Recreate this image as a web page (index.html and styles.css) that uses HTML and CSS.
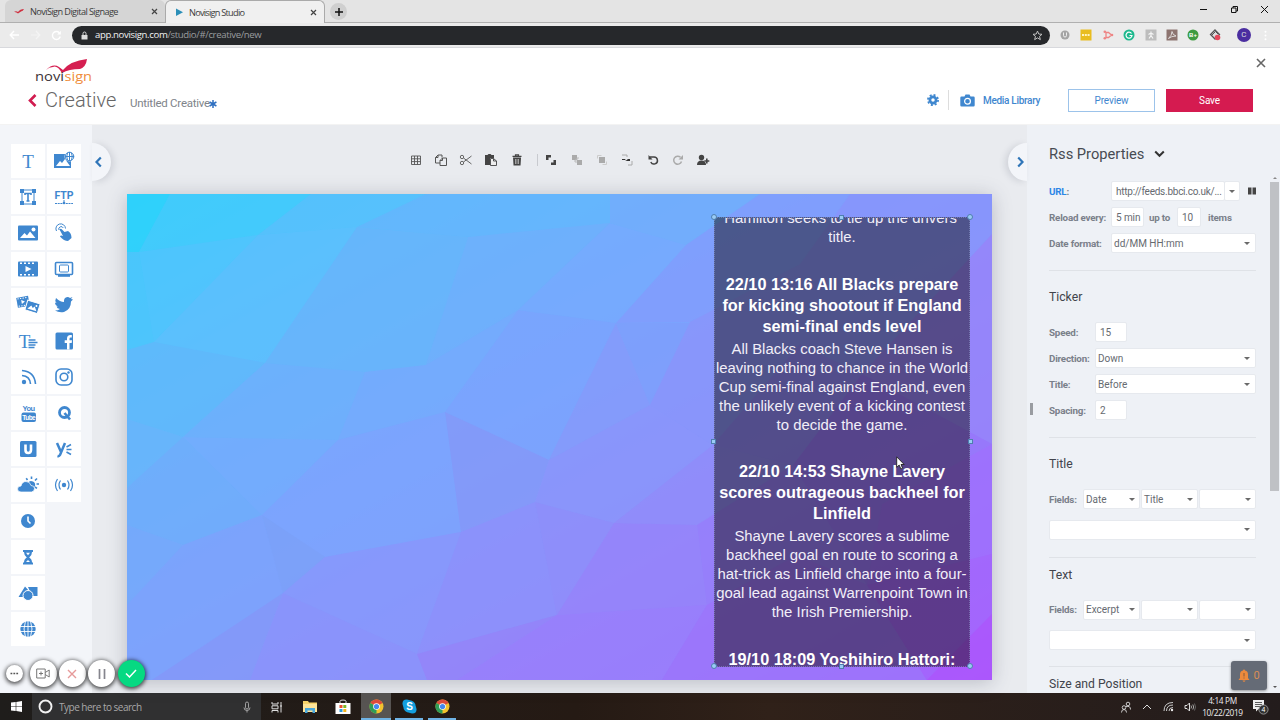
FILE: index.html
```html
<!DOCTYPE html>
<html lang="en">
  <head>
    <meta charset="UTF-8" />
    <meta name="viewport" content="width=device-width, initial-scale=1.0" />
    <title>Novisign Studio</title>
    <link rel="stylesheet" href="styles.css">
  </head>
  <body>
    <!-- Browser tabs -->
    <div class="tab-strip">
      <div class="tab">
        <svg class="tab-icon" width="10" height="10" viewBox="0 0 10 10"><path d="M0 6 Q2 4.500 4 6 Q6 3 10 3 Q9 5 7 5.500 L4 7.500 Q2 5.500 0 6z" fill="#cf3040"/></svg>
        <span class="tab-name">NoviSign Digital Signage</span>
        <svg width="7" height="7" viewBox="0 0 7 7"><path d="M1 1l5 5M6 1l-5 5" stroke="#444" stroke-width="1.200"/></svg>
      </div>
      <div class="tab active">
        <svg class="tab-icon" width="10" height="10" viewBox="0 0 10 10"><path d="M1 1.500l7 3.700-7 3.700z" fill="#2b8fb8"/></svg>
        <span class="tab-name">Novisign Studio</span>
        <svg width="7" height="7" viewBox="0 0 7 7"><path d="M1 1l5 5M6 1l-5 5" stroke="#444" stroke-width="1.200"/></svg>
      </div>
      <div class="new-tab"><svg width="10" height="10" viewBox="0 0 10 10"><path d="M5 1v8M1 5h8" stroke="#111" stroke-width="1.500"/></svg></div>
      <div class="window-controls">
        <svg width="9" height="9" viewBox="0 0 9 9"><path d="M1 4.500h7" stroke="#111"/></svg>
        <svg width="9" height="9" viewBox="0 0 9 9"><path d="M1.500 3h4.500v4.500h-4.500zM3 3v-1.500h4.500v4.500h-1.500" fill="none" stroke="#111"/></svg>
        <svg width="9" height="9" viewBox="0 0 9 9"><path d="M1 1l7 7M8 1l-7 7" stroke="#111"/></svg>
      </div>
    </div>

    <!-- Address bar -->
    <div class="toolbar">
      <div class="nav-buttons">
        <svg width="11" height="10" viewBox="0 0 11 10"><path d="M10 5H1.500M5 1L1.200 5 5 9" fill="none" stroke="#fff" stroke-width="1.400"/></svg>
        <svg width="11" height="10" viewBox="0 0 11 10"><path d="M1 5h8.500M6 1l3.800 4L6 9" fill="none" stroke="#f4f4f4" stroke-width="1.200"/></svg>
        <svg width="11" height="11" viewBox="0 0 11 11"><path d="M9.300 6.500A4 4 0 1 1 8.300 2.700" fill="none" stroke="#fff" stroke-width="1.400"/><path d="M9.800.8v3.700H6.100z" fill="#fff"/></svg>
      </div>
      <div class="address">
        <svg width="7" height="9" viewBox="0 0 7 9"><path d="M.5 4h6v4.500h-6z" fill="#ddd"/><path d="M2 4V2.500a1.500 1.500 0 0 1 3 0V4" fill="none" stroke="#ddd"/></svg>
        <span class="url"><b>app.novisign.com</b>/studio/#/creative/new</span>
        <svg width="11" height="11" viewBox="0 0 12 12"><path d="M6 1.200l1.400 3.200 3.500.3-2.700 2.300.9 3.500L6 8.600l-3.100 1.900.9-3.500L1.100 4.700l3.500-.3z" fill="none" stroke="#ccc"/></svg>
      </div>
      <div class="extensions">
        <svg width="12" height="12" viewBox="0 0 12 12"><circle cx="6" cy="6" r="4.500" fill="#a5a5a5"/><path d="M4.500 3.500v3a1.500 1.500 0 0 0 3 0v-3" fill="none" stroke="#eee"/></svg>
        <svg width="12" height="12" viewBox="0 0 12 12"><path d="M.5.5h11v11H.5z" fill="#e9bd20"/><path d="M2 6h8" stroke="#fff3c0" stroke-width="1.800" stroke-dasharray="2 .8"/></svg>
        <svg width="12" height="12" viewBox="0 0 12 12"><path d="M4 3.500h2.500L9.500 6 6.500 8.500H4z" fill="none" stroke="#ee8585" stroke-width="1.300"/><circle cx="2.800" cy="2.800" r="1.300" fill="#ee8585"/><circle cx="2.800" cy="9.200" r="1.300" fill="#ee8585"/><circle cx="10" cy="6" r="1.300" fill="#ee8585"/></svg>
        <svg width="12" height="12" viewBox="0 0 12 12"><circle cx="6" cy="6" r="5.500" fill="#1fb98e"/><path d="M8.500 4.500A3 3 0 1 0 9 6.500H6.500" fill="none" stroke="#fff" stroke-width="1.200"/></svg>
        <svg width="12" height="12" viewBox="0 0 12 12"><path d="M.5.500h11v11H.5z" fill="#bdbdbd"/><path d="M6 2.500v4l-2 3M6 6.500l2 3M3.500 5.500L6 4l2.500 1.500" fill="none" stroke="#f4f4f4" stroke-width="1.200"/></svg>
        <svg width="12" height="12" viewBox="0 0 12 12"><path d="M.5.500h11v11H.5z" fill="#8d7470"/><path d="M6 2.500q0 4-3.500 7 3-2.500 7.500-2.500Q6.500 6 6 2.500" fill="none" stroke="#eee" stroke-width=".8"/></svg>
        <svg width="12" height="12" viewBox="0 0 12 12"><circle cx="6" cy="6" r="5.500" fill="#3e9b40"/><text x="6" y="8.300" class="ext-label">B+</text></svg>
        <svg width="12" height="12" viewBox="0 0 12 12"><path d="M6 1l4.500 4.500L6 10 1.500 5.500z" fill="#ddd" stroke="#555" stroke-width="1.300"/><path d="M3 6l3.500-3.500L9 5" fill="none" stroke="#555"/><circle cx="8.500" cy="8.500" r="2.800" fill="#e6475a"/></svg>
      </div>
      <div class="avatar">C</div>
      <svg class="kebab" width="3" height="11" viewBox="0 0 3 11"><circle cx="1.500" cy="1.800" r="1" fill="#fff"/><circle cx="1.500" cy="5.500" r="1" fill="#fff"/><circle cx="1.500" cy="9.200" r="1" fill="#fff"/></svg>
    </div>

    <!-- App header -->
    <header class="app-header">
      <div class="brand">
        <svg class="logo" width="60" height="26" viewBox="0 0 60 26">
          <path d="M11 12 Q18 5 24 9 L28 12 Q35 3 52 1 Q51 9 45 11 Q34 11 27 15 Q22 7 18 9 Q14 9 11 12z" fill="#d51f51"/>
          <text x="0" y="23" textLength="29" lengthAdjust="spacingAndGlyphs" class="logo-text" fill="#3a3236">novi</text>
          <text x="29.500" y="23" textLength="27.500" lengthAdjust="spacingAndGlyphs" class="logo-text" fill="#ef8c3a">sign</text>
        </svg>
        <div class="page-title">
          <svg width="9" height="13" viewBox="0 0 9 13"><path d="M7.500 1L2 6.500 7.500 12" fill="none" stroke="#d11c50" stroke-width="2.600"/></svg>
          <h1>Creative</h1>
          <span class="creative-name">Untitled Creative</span>
          <svg width="8" height="8" viewBox="0 0 8 8"><path d="M4 0v8M.6 2l6.800 4M7.400 2L.6 6" stroke="#2f6fc0" stroke-width="1.500"/></svg>
        </div>
      </div>
      <svg class="close" width="10" height="10" viewBox="0 0 10 10"><path d="M1 1l8 8M9 1L1 9" stroke="#666" stroke-width="1.600"/></svg>
      <div class="header-actions">
        <svg width="12" height="12" viewBox="0 0 12 12"><circle cx="6" cy="6" r="3.100" fill="none" stroke="#3f87cf" stroke-width="2.700"/><circle cx="6" cy="6" r="5.100" fill="none" stroke="#3f87cf" stroke-width="1.700" stroke-dasharray="2 2"/></svg>
        <span class="divider"></span>
        <svg width="15" height="13" viewBox="0 0 15 13"><path d="M1.500 2.500h3L5.500.5h4l1 2h3q1.200 0 1.200 1.200v7.600q0 1.200-1.200 1.200h-12Q.3 12.500.3 11.300V3.700Q.3 2.500 1.500 2.500z" fill="#3f87cf"/><circle cx="7.500" cy="7.300" r="2.900" fill="none" stroke="#fff" stroke-width="1.200"/></svg>
        <span class="library-link">Media Library</span>
        <button class="btn btn-preview">Preview</button>
        <button class="btn btn-save">Save</button>
      </div>
    </header>

    <main class="workspace">
      <!-- Widget palette -->
      <aside class="sidebar">
        <div class="tools">
          <div class="tool"><svg viewBox="0 0 24 24"><text x="12" y="18.500" class="serif-t">T</text></svg></div>
          <div class="tool"><svg viewBox="0 0 24 24"><path d="M2 5h17v14H2z"/><path d="M4 17l4-5 2 2 3-4 5 7z" fill="#fff"/><circle cx="17.500" cy="7.500" r="5" fill="#fff"/><g class="line"><circle cx="17.500" cy="7.500" r="4.300"/><path d="M13 7.500h9M17.500 3v9M15.500 4q-1.500 3.500 0 7M19.500 4q1.500 3.500 0 7"/></g></svg></div>
          <div class="tool"><svg viewBox="0 0 24 24"><path d="M4 4h4v4H4zM16 4h4v4h-4zM4 16h4v4H4zM16 16h4v4h-4z"/><path class="line" d="M6 8v8M18 8v8M8 5h8M8 19h8"/><path class="line bold" d="M9 10V8.500h6V10M12 9v7M10.500 16h3"/></svg></div>
          <div class="tool"><svg viewBox="0 0 24 24"><text x="12" y="14" class="ftp">FTP</text><path class="line" d="M3 18.500h18M12 15v3" stroke-dasharray="2 .7"/><circle cx="12" cy="18" r="1.300"/></svg></div>
          <div class="tool"><svg viewBox="0 0 24 24"><rect x="2" y="4.500" width="20" height="15" rx="1"/><path d="M4 17l4.500-5 2.500 2.500 3-4 5.500 6.500z" fill="#fff"/><circle cx="17.500" cy="8.500" r="2" fill="#fff"/></svg></div>
          <div class="tool"><svg viewBox="0 0 24 24"><path class="line" d="M4.500 10a4.800 4.800 0 1 1 9-2.500M7 9a2.300 2.300 0 0 1 4.300-2"/><path d="M7.500 8.500q1.300-1.500 2.500 0l2.500 2.500 3.500-1q3.500 2 3.500 7L16 20q-4 0-8-4.500.5-1.500 3-.5z"/></svg></div>
          <div class="tool"><svg viewBox="0 0 24 24"><rect x="2" y="4.500" width="20" height="15" rx="1"/><path d="M4 6.300h16M4 17.700h16" stroke="#fff" stroke-width="1.500" stroke-dasharray="2 2"/><path d="M9.500 9l6 3-6 3z" fill="#fff"/></svg></div>
          <div class="tool"><svg viewBox="0 0 24 24"><rect class="line bold" x="3.500" y="5.500" width="17" height="12" rx="1"/><rect class="line" x="7.500" y="8" width="9" height="7" rx="1"/><path d="M6 18h12v1.800H6z"/></svg></div>
          <div class="tool"><svg viewBox="0 0 24 24"><g transform="rotate(-10 6 9)"><rect x="1" y="4" width="12" height="10"/><path d="M2 5.300h10M2 12.700h10" stroke="#fff" stroke-dasharray="1.300 1.300"/><path d="M5.500 7l3.500 2-3.500 2z" fill="#fff"/></g><g transform="rotate(17 17 14)"><rect x="10" y="9" width="13" height="10" stroke="#fff"/><path d="M12 17l3-4 2 2 1.500-2 3 4z" fill="#fff"/><circle cx="20" cy="12" r="1" fill="#fff"/></g></svg></div>
          <div class="tool"><svg viewBox="0 0 24 24"><path d="M21 6.500l-2 2q0 8-7 10.500-5 1-9-1.500 3 0 5-1.500-3-.5-3.500-2.500h1.500Q3 12.300 3 9.500l1.500.5Q2.500 7.500 4 5q4 4 8 4-.5-4.500 3.500-5 1.500 0 2.500 1l2.500-1-1.500 2z"/></svg></div>
          <div class="tool"><svg viewBox="0 0 24 24"><text x="8.500" y="18.500" class="serif-t">T</text><path class="line bold" d="M12.500 11h7M12.500 13.500h9M12.500 16h7M12.500 18.500h6"/></svg></div>
          <div class="tool"><svg viewBox="0 0 24 24"><rect x="3.500" y="3.500" width="17.500" height="17" rx="1.500"/><path d="M15 20.500V14h-2.300v-2.700H15V9.500q0-3.500 3.500-3.500h1.300v2.500h-1.300q-1 0-1 1.300v1.500H20l-.3 2.700h-2.200v6.500" fill="#fff"/></svg></div>
          <div class="tool"><svg viewBox="0 0 24 24"><circle cx="8" cy="17" r="2.200"/><path class="line bold" d="M6 10.500q8 .5 8.500 8.500M6 5.500q12.500 1 13.500 13.500"/></svg></div>
          <div class="tool"><svg viewBox="0 0 24 24"><rect class="line bold" x="4" y="4" width="16" height="16" rx="5"/><circle class="line bold" cx="12" cy="12" r="3.800"/><circle cx="16.500" cy="7.500" r="1.200"/></svg></div>
          <div class="tool"><svg viewBox="0 0 24 24"><text x="12.500" y="10" class="you">You</text><rect x="5.500" y="11.500" width="14.500" height="9.500" rx="2"/><text x="12.700" y="19.300" class="you tube">Tube</text></svg></div>
          <div class="tool"><svg viewBox="0 0 24 24"><circle cx="12.500" cy="11.500" r="5" fill="none" stroke="#3f87cf" stroke-width="2.800"/><path d="M12.500 12l5.500 6.500" stroke="#3f87cf" stroke-width="2.600"/></svg></div>
          <div class="tool"><svg viewBox="0 0 24 24"><rect x="4" y="4" width="16.500" height="16" rx="1.500"/><path d="M9.500 7.500v5.500q0 3 2.700 3t2.800-3V7.500" fill="none" stroke="#fff" stroke-width="2.600"/></svg></div>
          <div class="tool"><svg viewBox="0 0 24 24"><path d="M5 6l4 9M13 6L8 18q-.8 1.500-2.500 1" fill="none" stroke="#3f87cf" stroke-width="2.500"/><path class="line bold" d="M14.500 10l4.500-2.500M14.500 12.500h5M14.500 15l4.500 2.500"/></svg></div>
          <div class="tool"><svg viewBox="0 0 24 24"><path class="line bold" d="M15.500 6V3.500M11.500 7l-1.300-1.800M19 7.500L21 5.500M20.500 11H23M19 14l2 1.300"/><path d="M12 9.500a4 4 0 0 1 7 3.500l-1.500 2z"/><path d="M5 19q-3.500 0-3.500-3t3.500-3q1-4.500 5-4.500t5 4q3.500 0 3.500 3t-3 3.500z" stroke="#fff" stroke-width=".7"/></svg></div>
          <div class="tool"><svg viewBox="0 0 24 24"><circle cx="12" cy="12" r="2.200"/><path class="line thin" d="M8.500 7.500q-3 4.500 0 9M15.500 7.500q3 4.500 0 9M5.500 6q-4 6 0 12M18.500 6q4 6 0 12"/></svg></div>
          <div class="tool"><svg viewBox="0 0 24 24"><circle cx="12" cy="12" r="7"/><path d="M12 7.500V12l2.500 2.500" fill="none" stroke="#fff" stroke-width="1.600"/></svg></div>
          <div class="blank"></div>
          <div class="tool"><svg viewBox="0 0 24 24"><path d="M7 5h10v2h-1q0 3.500-2.800 5.500Q16 14 16 17.500h1v2H7v-2h1q0-3.500 2.800-5Q8 10.500 8 7H7z"/><path d="M10 7.800h4l-2 2.500zM10 17l2-2 2 2z" fill="#fff"/></svg></div>
          <div class="blank"></div>
          <div class="tool"><svg viewBox="0 0 24 24"><path d="M2.500 16L9 5.500l4.500 5L8 16zM12 6h9.500v9H16z"/><circle cx="12" cy="14.500" r="5" stroke="#fff" stroke-width="1"/></svg></div>
          <div class="blank"></div>
          <div class="tool"><svg viewBox="0 0 24 24"><circle cx="12" cy="12" r="7.700"/><path d="M4 9.500h16M4 14.500h16M12 4v16M9.500 4q-3 8 0 16M14.500 4q3 8 0 16" fill="none" stroke="#fff" stroke-width=".9"/></svg></div>
        </div>
        <div class="handle handle-left"><svg width="9" height="12" viewBox="0 0 9 12"><path d="M6.800 1.500L2.500 6l4.300 4.500" fill="none" stroke="#2f75b8" stroke-width="2.200"/></svg></div>
      </aside>

      <!-- Stage -->
      <section class="stage">
        <div class="edit-bar">
          <svg viewBox="0 0 14 14"><path d="M2.500 3h9v8.500h-9zM5.500 3v8.500M8.500 3v8.500M2.500 5.800h9M2.500 8.600h9" fill="none" stroke="#555" stroke-width=".9"/></svg>
          <svg viewBox="0 0 14 14"><path d="M6 10H1.500V4.500L4 2h4v2.500M6 12.500v-5L8.500 5h4v7.500zM4 2v2.500H1.500M8.500 5v2.500H6" fill="none" stroke="#555"/></svg>
          <svg viewBox="0 0 14 14"><g fill="none" stroke="#666"><circle cx="3" cy="4" r="1.700"/><circle cx="3" cy="10" r="1.700"/><path d="M4.500 5L12.500 11M4.500 9L12.500 3"/></g></svg>
          <svg viewBox="0 0 14 14"><path d="M1 2h2.500l1-1h2l1 1H10v3H6v7H1z" fill="#444"/><path d="M6.500 12.500V5.500h3L12.500 8v4.500zM9.500 5.500V8h3" fill="#eee" stroke="#444" stroke-width=".9"/></svg>
          <svg viewBox="0 0 14 14"><path d="M2.500 3.300h9M5.500 3V1.800h3V3" fill="none" stroke="#444" stroke-width="1.200"/><path d="M3 4.500h8l-.5 8h-7z" fill="#444"/><path d="M5.500 6v5M7 6v5M8.500 6v5" stroke="#ccc" stroke-width=".7"/></svg>
          <span class="bar-divider"></span>
          <svg viewBox="0 0 14 14"><path d="M2 2h5v2.500H4.500V7H2zM12 12H7V9.500h2.500V7H12z" fill="#444"/></svg>
          <svg viewBox="0 0 14 14"><path d="M2 2h5v5H2zM7 7h5v5H7z" fill="#aaa"/><path d="M5 7h2V5h2M5 7v2h2" fill="none" stroke="#bbb"/></svg>
          <svg viewBox="0 0 14 14"><path d="M4 4h6v6H4z" fill="#aaa"/><path d="M2.500 5.500v-3h4M11.500 8.500v3h-4" fill="none" stroke="#ccc"/></svg>
          <svg viewBox="0 0 14 14"><path d="M2 2h5v2M12 8v4H8" fill="none" stroke="#aaa"/><path d="M2 6h3l1 1.500L8 6h2v2H6.500L5 7H2z" fill="#333"/></svg>
          <svg viewBox="0 0 14 14"><path d="M3.500 4H8a3.500 3.500 0 1 1-3.200 5" fill="none" stroke="#444" stroke-width="1.500"/><path d="M2.500 2v4.500h4z" fill="#444"/></svg>
          <svg viewBox="0 0 14 14"><path d="M9.500 4.300a4 4 0 1 0 1 4.200" fill="none" stroke="#aaa" stroke-width="1.500"/><path d="M12 2v4.500H7.500z" fill="#aaa"/></svg>
          <svg viewBox="0 0 14 14"><circle cx="5.500" cy="4.500" r="2.700" fill="#444"/><path d="M1 12q0-4.500 4.500-4.500T10 12z" fill="#444"/><path d="M10.800 5.500v5M8.300 8h5" stroke="#444" stroke-width="1.600"/></svg>
        </div>

        <div class="canvas">
          <svg class="backdrop" viewBox="0 0 865 486" preserveAspectRatio="none">
            <defs>
              <linearGradient id="sky" x1="0" y1="0" x2="1" y2="1">
                <stop offset="0" stop-color="#30d1fb"/>
                <stop offset=".2" stop-color="#5dbefd"/>
                <stop offset=".45" stop-color="#7ba5fe"/>
                <stop offset=".65" stop-color="#8e8ffb"/>
                <stop offset=".85" stop-color="#9d72fc"/>
                <stop offset="1" stop-color="#ad55fd"/>
              </linearGradient>
            </defs>
            <path d="M0 0h865v486H0z" fill="url(#sky)"/>
            <g opacity=".85">
              <path d="M0 0h43L12 58H0z" fill="#2ed2fb"/>
              <path d="M43 0h141L131 41 12 58z" fill="#43cbfc"/>
              <path d="M0 58h12l15 90-27 8z" fill="#4cc6fc"/>
              <path d="M12 58l119-17L27 148z" fill="#50c5fe"/>
              <path d="M184 0h115l-69 33-99 8z" fill="#57c1fd"/>
              <path d="M131 41l99-8-92 136-111-21z" fill="#5cc0fe"/>
              <path d="M0 156l27-8 111 21-82 74-56-18z" fill="#60b9fb"/>
              <path d="M299 0h184v29L341 43l-111-10z" fill="#65b6fd"/>
              <path d="M230 33l111 10-42 128-61 7-100-9z" fill="#68b5fb"/>
              <path d="M341 43l142-14-92 87-92 55z" fill="#6fb0fc"/>
              <path d="M138 169l100 9-27 68-155-3z" fill="#6eb0fc"/>
              <path d="M0 225l56 18L0 294z" fill="#68b5fb"/>
              <path d="M56 243l79 78-79 30-56-20v-37z" fill="#70adfb"/>
              <path d="M56 243l155 3-76 75z" fill="#74acfd"/>
              <path d="M238 178l61-7 92-55-73 102-107 28z" fill="#75abfd"/>
              <path d="M483 29l76 22-70 78-98-13z" fill="#77aaff"/>
              <path d="M483 0h150l-74 51-76-22z" fill="#73adfc"/>
              <path d="M391 116l98 13-67 137-104-48z" fill="#7ba4fe"/>
              <path d="M211 246l107-28 16 120-136 25-63-42z" fill="#7da4fe"/>
              <path d="M318 218l104 48-14 42-74 30z" fill="#8499f9"/>
              <path d="M489 129l34 82-101 55z" fill="#859bfb"/>
              <path d="M489 129h74l-40 82z" fill="#7e9ffc"/>
              <path d="M559 51l74-51h90l-50 70-110 58-74 1z" fill="#829dfd"/>
              <path d="M422 266l101-55 63 40-99 78-79-21z" fill="#8b95fb"/>
              <path d="M563 128l110-58v80l-87 101-63-40z" fill="#8a95fb"/>
              <path d="M0 331l56 20-56 60z" fill="#76a9fb"/>
              <path d="M56 351l79-30 21 78L25 486H0v-75z" fill="#7da3fc"/>
              <path d="M135 321l63 42-42 36z" fill="#7ca1f9"/>
              <path d="M198 363l136-25-44 122-134-61z" fill="#8898fc"/>
              <path d="M25 486l131-87-33 87z" fill="#8499f9"/>
              <path d="M123 486l33-87 134 61 10 26z" fill="#8b93fb"/>
              <path d="M334 338l74-30 22 113-140 39z" fill="#8d91fb"/>
              <path d="M408 308l79 21-57 92z" fill="#8f8efa"/>
              <path d="M487 329l99-78 80 20-96 60z" fill="#918cfa"/>
              <path d="M586 251l87-101 62 30-69 91z" fill="#9189fb"/>
              <path d="M487 329l83 2 10 80-150 10z" fill="#9684fa"/>
              <path d="M570 331l96-60 74 120-70-30-90 50z" fill="#977ffb"/>
              <path d="M290 460l140-39-100 65h-30z" fill="#9485f9"/>
              <path d="M430 421l150-10-45 75H330z" fill="#997ffc"/>
              <path d="M580 411l90-50 70 30 60 95H535z" fill="#9c76fb"/>
              <path d="M673 70l50-70h142v40l-130 140-62-30z" fill="#8994fc"/>
              <path d="M865 40v210l-130-70z" fill="#9784fa"/>
              <path d="M735 180l130 70-110 60-15 81-74-120z" fill="#9877fb"/>
              <path d="M755 310l110-60v110l-125 31z" fill="#9f70fe"/>
              <path d="M740 391l125-31v60l-65 66z" fill="#a367fd"/>
              <path d="M865 420v66h-65z" fill="#ab58fc"/>
            </g>
          </svg>

          <div class="rss-widget">
            <div class="rss-view">
              <div class="rss-track">
                <p>Hamilton seeks to tie up the drivers'<br>title.</p>
                <h3>22/10 13:16 All Blacks prepare<br>for kicking shootout if England<br>semi-final ends level</h3>
                <p>All Blacks coach Steve Hansen is<br>leaving nothing to chance in the World<br>Cup semi-final against England, even<br>the unlikely event of a kicking contest<br>to decide the game.</p>
                <h3>22/10 14:53 Shayne Lavery<br>scores outrageous backheel for<br>Linfield</h3>
                <p>Shayne Lavery scores a sublime<br>backheel goal en route to scoring a<br>hat-trick as Linfield charge into a four-<br>goal lead against Warrenpoint Town in<br>the Irish Premiership.</p>
                <h3>19/10 18:09 Yoshihiro Hattori:</h3>
              </div>
            </div>
            <i class="grip round nw"></i>
            <i class="grip n"></i>
            <i class="grip round ne"></i>
            <i class="grip w"></i>
            <i class="grip e"></i>
            <i class="grip round sw"></i>
            <i class="grip s"></i>
            <i class="grip round se"></i>
          </div>
          <svg class="cursor" width="9" height="14" viewBox="0 0 9 14"><path d="M.7.8v10.500l2.500-2.200 1.700 3.900 1.700-.8L5 8.500h3.200z" fill="#fff" stroke="#222" stroke-width=".9"/></svg>
        </div>
      </section>

      <!-- Properties -->
      <aside class="properties">
        <div class="handle handle-right"><svg width="9" height="12" viewBox="0 0 9 12"><path d="M2.200 1.500L6.500 6l-4.300 4.500" fill="none" stroke="#2f75b8" stroke-width="2.200"/></svg></div>
        <span class="splitter"></span>
        <div class="panel-body">
          <h2>Rss Properties <svg width="11" height="8" viewBox="0 0 11 8"><path d="M1.200 1.500l4.300 4.300 4.300-4.300" fill="none" stroke="#333" stroke-width="2"/></svg></h2>

          <div class="group first">
            <div class="row wide-label">
              <label class="link">URL<span>:</span></label>
              <div class="field url-field">http://feeds.bbci.co.uk/...</div>
              <div class="field drop-button"><i class="caret"></i></div>
              <svg class="columns-icon" width="8" height="8" viewBox="0 0 8 8"><path d="M0 .5h3.500v7H0zM4.500.5H8v7H4.500z" fill="#444"/></svg>
            </div>
            <div class="row wide-label">
              <label>Reload every:</label>
              <div class="field minutes">5 min</div>
              <b class="upto">up to</b>
              <div class="field count">10</div>
              <b class="items">items</b>
            </div>
            <div class="row wide-label">
              <label>Date format:</label>
              <div class="field select">dd/MM HH:mm<i class="caret"></i></div>
            </div>
          </div>

          <div class="group ticker">
            <h3>Ticker</h3>
            <div class="row"><label>Speed:</label><div class="field small">15</div></div>
            <div class="row"><label>Direction:</label><div class="field select">Down<i class="caret"></i></div></div>
            <div class="row"><label>Title:</label><div class="field select">Before<i class="caret"></i></div></div>
            <div class="row"><label>Spacing:</label><div class="field small">2</div></div>
          </div>

          <div class="group">
            <h3>Title</h3>
            <div class="row fields">
              <label>Fields:</label>
              <div class="field select">Date<i class="caret"></i></div>
              <div class="field select">Title<i class="caret"></i></div>
              <div class="field select"><i class="caret"></i></div>
            </div>
            <div class="row single"><div class="field select"><i class="caret"></i></div></div>
          </div>

          <div class="group text-group">
            <h3>Text</h3>
            <div class="row fields">
              <label>Fields:</label>
              <div class="field select">Excerpt<i class="caret"></i></div>
              <div class="field select"><i class="caret"></i></div>
              <div class="field select"><i class="caret"></i></div>
            </div>
            <div class="row single"><div class="field select"><i class="caret"></i></div></div>
          </div>

          <div class="group last"><h3>Size and Position</h3></div>
        </div>
        <div class="scrollbar">
          <i class="arrow-up"></i>
          <div class="thumb"></div>
          <i class="arrow-down"></i>
        </div>
        <div class="alerts">
          <svg width="12" height="13" viewBox="0 0 12 13"><path d="M6 .5q1 0 1 1 3 .7 3 4V9l1.500 2H.5L2 9V5.500q0-3.300 3-4 0-1 1-1zM4.500 11.500h3q-.3 1.300-1.500 1.300t-1.500-1.300z" fill="#ed8a3c"/><path d="M6 4v3.500M6 8.500v1" stroke="#8a5a38" stroke-width="1"/></svg>
          <span>0</span>
        </div>
      </aside>
    </main>

    <!-- Recorder controls -->
    <div class="recorder">
      <span class="rec-btn mini"><svg width="9" height="3" viewBox="0 0 9 3"><path d="M.5 1.500h8" stroke="#555" stroke-width="1.300" stroke-dasharray="1.800 1.100"/></svg></span>
      <span class="rec-btn"><svg width="14" height="11" viewBox="0 0 14 11"><path d="M.7 1h8.500v9H.7zM9.200 4.500l4-2.500v7l-4-2.500M5 3.500v4M3 5.500h4" fill="none" stroke="#777"/></svg></span>
      <span class="rec-btn"><svg width="10" height="10" viewBox="0 0 10 10"><path d="M1 1l8 8M9 1L1 9" stroke="#e69a9a" stroke-width="1.400"/></svg></span>
      <span class="rec-btn"><svg width="8" height="12" viewBox="0 0 8 12"><path d="M1.500 1v10M6.500 1v10" stroke="#85858d" stroke-width="1.700"/></svg></span>
      <span class="rec-btn done"><svg width="12" height="9" viewBox="0 0 12 9"><path d="M1 4.500L4.500 8 11 1" fill="none" stroke="#fff" stroke-width="1.500"/></svg></span>
    </div>

    <!-- Taskbar -->
    <footer class="taskbar">
      <div class="start"><svg width="11" height="11" viewBox="0 0 11 11"><path d="M0 1.600L4.700 1v4.200H0zM5.300.9L11 0v5.200H5.300zM0 5.800h4.700V10L0 9.400zM5.300 5.800H11V11l-5.700-.9z" fill="#fff"/></svg></div>
      <div class="search">
        <svg width="15" height="15" viewBox="0 0 15 15"><circle cx="7.500" cy="7.500" r="6" fill="none" stroke="#f2f2f2" stroke-width="1.900"/></svg>
        <span>Type here to search</span>
        <svg width="8" height="12" viewBox="0 0 8 12"><path d="M2.500 2.500a1.500 1.500 0 0 1 3 0v4a1.500 1.500 0 0 1-3 0zM1 6.500q0 3 3 3t3-3M4 9.500v2" fill="none" stroke="#bbb" stroke-width=".8"/></svg>
      </div>
      <div class="apps">
        <div class="app"><svg width="12" height="12" viewBox="0 0 12 12"><path d="M1 1v2h6V1M1 4.800h6v3H1zM1 11.500v-2h6v2M10 1v10.500M9 5h2" fill="none" stroke="#ddd"/></svg></div>
        <div class="app"><svg width="16" height="14" viewBox="0 0 16 14"><path d="M1 1h5l1 1.500h8V12H1z" fill="#f6d36b"/><path d="M1 4h14v8H1z" fill="#fce49a"/><path d="M3 13V8h10v5h-2.500v-2.500h-5V13z" fill="#4aa8dc"/></svg></div>
        <div class="app"><svg width="16" height="16" viewBox="0 0 16 16"><path d="M5 4.500V2.200Q5 1 8 1t3 1.200v2.300" fill="none" stroke="#ddd"/><path d="M.5 4h15v11H.5z" fill="#fff"/><path d="M4.500 6h3v3h-3z" fill="#e8502e"/><path d="M8.300 6h3v3h-3z" fill="#7db928"/><path d="M4.500 10h3v3h-3z" fill="#2a9bdc"/><path d="M8.300 10h3v3h-3z" fill="#f4b41c"/></svg></div>
        <div class="app current"><svg width="15" height="15" viewBox="0 0 15 15"><circle cx="7.500" cy="7.500" r="7" fill="#f2c32f"/><path d="M7.500 7.500L1.400 4A7 7 0 0 1 13.600 4z" fill="#dd4b3e"/><path d="M7.500 7.500L1.400 4A7 7 0 0 0 7.500 14.500z" fill="#2e9d58"/><circle cx="7.500" cy="7.500" r="3.300" fill="#fff"/><circle cx="7.500" cy="7.500" r="2.600" fill="#4587ef"/></svg></div>
        <div class="app running"><svg width="15" height="15" viewBox="0 0 15 15"><circle cx="7.500" cy="7.500" r="6.200" fill="#149fdf"/><circle cx="4.500" cy="4.500" r="4" fill="#149fdf"/><circle cx="10.500" cy="10.500" r="4" fill="#149fdf"/><text x="7.500" y="11" class="skype">S</text></svg></div>
        <div class="app running"><svg width="15" height="15" viewBox="0 0 15 15"><circle cx="7.500" cy="7.500" r="7" fill="#f2c32f"/><path d="M7.500 7.500L1.400 4A7 7 0 0 1 13.600 4z" fill="#dd4b3e"/><path d="M7.500 7.500L1.400 4A7 7 0 0 0 7.500 14.500z" fill="#2e9d58"/><circle cx="7.500" cy="7.500" r="3.300" fill="#fff"/><circle cx="7.500" cy="7.500" r="2.600" fill="#4587ef"/></svg></div>
      </div>
      <div class="tray">
        <svg width="12" height="12" viewBox="0 0 12 12"><g fill="none" stroke="#ddd" stroke-width=".9"><circle cx="8" cy="3" r="1.800"/><circle cx="4" cy="6.500" r="1.800"/><path d="M1.500 11.500q0-3 2.500-3t2.500 3M6 5.500q4.500-1 4.500 3"/></g></svg>
        <svg width="10" height="6" viewBox="0 0 10 6"><path d="M1 5l4-4 4 4" fill="none" stroke="#ddd"/></svg>
        <svg width="11" height="11" viewBox="0 0 11 11"><path d="M1 10Q1 1.500 10 1.500M3.500 10Q3.500 4 10 4M6 10Q6 6.500 10 6.500" fill="none" stroke="#ccc"/><circle cx="9" cy="9" r="1.200" fill="#eee"/></svg>
        <svg width="12" height="10" viewBox="0 0 12 10"><path d="M1 3.500h2l2.500-2.500v8L3 6.500H1z" fill="none" stroke="#ddd"/><path d="M7 3.500q1 1.500 0 3M8.800 2.500q1.700 2.500 0 5" fill="none" stroke="#ccc" stroke-width=".8"/><path d="M10.500 1.500q2 3.500 0 7" fill="none" stroke="#777" stroke-width=".8"/></svg>
        <div class="clock"><span>4:14 PM</span><span>10/22/2019</span></div>
        <svg width="17" height="17" viewBox="0 0 17 17"><path d="M1 2h11v9H6.500L4 13.500V11H1z" fill="#eee"/><path d="M3 4.500h7M3 6.500h7M3 8.500h5" stroke="#333" stroke-width=".8"/><circle cx="11.500" cy="11.500" r="4.600" fill="#333" stroke="#aaa" stroke-width=".8"/><text x="11.500" y="14" class="note-count">4</text></svg>
      </div>
    </footer>
  </body>
</html>
```

FILE: styles.css
```css
* {
  margin: 0;
  padding: 0;
  box-sizing: border-box;
}

:root {
  --blue: #3f87cf;
  --pink: #d51b50;
  --panel: #eef1f6;
  --text: #50545c;
}

body {
  width: 1280px;
  height: 720px;
  overflow: hidden;
  display: flex;
  flex-direction: column;
  font-family: Roboto, sans-serif;
  background: #fff;
}

svg {
  display: block;
  flex-shrink: 0;
}

/* browser chrome */
.tab-strip {
  height: 23px;
  display: flex;
  background: #e4e4e4;
  border-bottom: 1px solid #b0b0b0;
  padding-left: 5px;
  font-family: "Open Sans", sans-serif;
}

.tab {
  width: 160px;
  height: 22px;
  display: flex;
  align-items: center;
  padding: 0 7px 0 9px;
  background: #d5d5d5;
  border-radius: 6px 6px 0 0;
}

.tab.active {
  height: 23px;
  background: #f0f0f0;
  border: 1px solid #aaa;
  border-bottom: 0;
}

.tab-name {
  flex: 1;
  margin-left: 6px;
  font-size: 9.2px;
  letter-spacing: -0.6px;
  white-space: nowrap;
  color: #3c3c3c;
}

.tab.active .tab-name {
  margin-left: 4px;
  letter-spacing: -0.75px;
}

.new-tab {
  width: 17px;
  height: 17px;
  margin: 3px 0 0 5px;
  border-radius: 50%;
  background: #cfcfcf;
  display: flex;
  align-items: center;
  justify-content: center;
}

.window-controls {
  display: flex;
  align-items: center;
  gap: 21.5px;
  height: 19px;
  margin: 0 11px 0 auto;
}

.toolbar {
  height: 25px;
  display: flex;
  align-items: center;
  background: #ebebeb;
  border-bottom: 1px solid #d8d9dd;
}

.nav-buttons {
  width: 72px;
  padding-left: 9px;
  display: flex;
  align-items: center;
  gap: 10px;
}

.address {
  width: 978px;
  height: 19px;
  display: flex;
  align-items: center;
  padding: 0 7px 0 9px;
  border-radius: 10px;
  background: #26282b;
}

.url {
  flex: 1;
  margin-left: 7px;
  font-family: "Open Sans", sans-serif;
  font-size: 9.6px;
  line-height: 18px;
  letter-spacing: -0.37px;
  color: #999c9f;
}

.url b {
  font-weight: 400;
  color: #f1f1f1;
}

.extensions {
  display: flex;
  gap: 9.4px;
  margin-left: 9px;
}

.ext-label {
  font: bold 6px "Liberation Sans", sans-serif;
  text-anchor: middle;
  fill: #fff;
}

.avatar {
  width: 14px;
  height: 14px;
  margin-left: 16px;
  border-radius: 50%;
  background: #4b2ea0;
  color: #ddd;
  font-size: 8px;
  line-height: 14px;
  text-align: center;
}

.kebab {
  margin-left: 13px;
}

/* app header */
.app-header {
  height: 77px;
  position: relative;
  display: flex;
  justify-content: space-between;
  background: #fff;
  border-bottom: 1px solid #f3f3f3;
  z-index: 2;
}

.brand {
  padding: 10px 0 0 28px;
}

.logo {
  margin-left: 7px;
  overflow: visible;
}

.logo-text {
  font: 500 12px "Open Sans", sans-serif;
}

.page-title {
  display: flex;
  align-items: center;
  margin-top: 3px;
}

.page-title h1 {
  margin-left: 8px;
  width: 70px;
  font-size: 20px;
  line-height: 26px;
  font-weight: 300;
  color: #666;
}

.creative-name {
  margin: 6px 1px 0 15px;
  width: 78px;
  font-size: 11.5px;
  letter-spacing: -0.25px;
  white-space: nowrap;
  color: #80848a;
}

.page-title svg:last-child {
  margin-top: 7px;
}

.close {
  position: absolute;
  right: 14px;
  top: 10px;
}

.header-actions {
  display: flex;
  align-items: center;
  height: 24px;
  margin: 40px 27px 0 0;
}

.divider {
  width: 1px;
  height: 20px;
  margin: 0 11px 0 9px;
  background: #ddd;
}

.library-link {
  width: 57px;
  margin: 0 28px 0 8px;
  font-size: 10px;
  font-weight: 500;
  letter-spacing: -0.3px;
  white-space: nowrap;
  color: var(--blue);
}

.btn {
  width: 87px;
  height: 23px;
  font-family: Roboto, sans-serif;
  font-size: 10px;
  letter-spacing: -0.15px;
}

.btn-preview {
  background: #fff;
  border: 1px solid #9cc3ea;
  color: var(--blue);
}

.btn-save {
  margin-left: 11px;
  background: var(--pink);
  border: 0;
  color: #fff;
}

/* workspace */
.workspace {
  height: 568px;
  display: flex;
  background: #e6e8ec;
}

.sidebar {
  position: relative;
  width: 92px;
  padding: 19px 0 0 11px;
  background: #f3f5f9;
  z-index: 1;
}

.tools {
  display: grid;
  grid-template-columns: 34px 34px;
  grid-auto-rows: 34px;
  gap: 2px;
}

.tool {
  display: flex;
  align-items: center;
  justify-content: center;
  background: #fff;
}

.tool svg {
  width: 24px;
  height: 24px;
  fill: var(--blue);
}

.tool .line {
  fill: none;
  stroke: var(--blue);
  stroke-width: 1;
}

.tool .bold {
  stroke-width: 1.6;
}

.tool .thin {
  stroke-width: 1.2;
}

.serif-t {
  font: 19px "Liberation Serif", serif;
  text-anchor: middle;
}

.ftp {
  font: bold 10.5px Roboto, sans-serif;
  text-anchor: middle;
}

.you {
  font: bold 7.5px "Liberation Sans", sans-serif;
  text-anchor: middle;
  letter-spacing: -0.5px;
}

.tube {
  font-size: 6.5px;
  fill: #fff;
}

.handle {
  position: absolute;
  top: 18px;
  width: 19px;
  height: 38px;
  display: flex;
  align-items: center;
  background: #f3f5f9;
}

.handle-left {
  left: 92px;
  padding-left: 2px;
  border-radius: 0 19px 19px 0;
  box-shadow: 3px 1px 6px rgba(70, 75, 95, 0.15);
}

.handle-right {
  left: -19px;
  padding-left: 8px;
  border-radius: 19px 0 0 19px;
  box-shadow: -3px 1px 6px rgba(70, 75, 95, 0.15);
}

.stage {
  width: 935px;
  background: #e9ebef;
}

.edit-bar {
  height: 69px;
  display: flex;
  align-items: center;
  padding-left: 311px;
}

.edit-bar svg {
  width: 14px;
  height: 14px;
  margin: 0 5.65px;
}

.bar-divider {
  width: 1px;
  height: 12px;
  margin: 0 6px 0 8px;
  background: #c8cacf;
}

.bar-divider + svg {
  margin-left: 0;
}

.canvas {
  position: relative;
  width: 865px;
  height: 486px;
  margin-left: 35px;
  box-shadow: 0 2px 18px rgba(60, 65, 85, 0.28);
}

.backdrop {
  width: 865px;
  height: 486px;
}

.rss-widget {
  position: absolute;
  left: 587px;
  top: 23px;
  width: 256px;
  height: 450px;
}

.rss-view {
  width: 256px;
  height: 450px;
  overflow: hidden;
  border: 1px dotted rgba(150, 165, 215, 0.5);
  background: rgba(15, 8, 12, 0.47);
}

.rss-track {
  margin: -9px -10px 0;
  font-family: "Liberation Sans", Arial, sans-serif;
  text-align: center;
  white-space: nowrap;
  color: #f1eef8;
}

.rss-track p {
  font-size: 14.9px;
  line-height: 19px;
  margin-bottom: 26.5px;
}

.rss-track h3 {
  font-size: 16.25px;
  line-height: 21px;
  margin-bottom: 3px;
  color: #fff;
}

.grip {
  position: absolute;
  width: 5px;
  height: 5px;
  background: #9bccf5;
  border: 0.5px solid #4f7fae;
}

.round {
  width: 6px;
  height: 6px;
  border-radius: 50%;
}

.nw { left: -3px; top: -3px; }
.n { left: 125px; top: -2px; }
.ne { right: -3px; top: -3px; }
.w { left: -3px; top: 222px; }
.e { right: -3px; top: 222px; }
.sw { left: -3px; bottom: -2px; }
.s { left: 125px; bottom: -2px; }
.se { right: -3px; bottom: -2px; }

.cursor {
  position: absolute;
  left: 769px;
  top: 262px;
}

/* properties panel */
.properties {
  position: relative;
  width: 253px;
  display: flex;
  background: var(--panel);
}

.splitter {
  position: absolute;
  left: 3px;
  top: 278px;
  width: 3px;
  height: 12px;
  background: #999ca1;
}

.panel-body {
  width: 229px;
  height: 568px;
  overflow: hidden;
  padding-left: 22px;
  font-size: 10px;
  color: var(--text);
}

.panel-body h2 {
  height: 56px;
  display: flex;
  align-items: center;
  gap: 10px;
  padding-top: 2px;
  font-size: 14.7px;
  font-weight: 400;
  color: #474b52;
}

.panel-body h3 {
  margin-bottom: -1px;
  font-size: 12.2px;
  font-weight: 400;
  line-height: 52px;
  color: #41444b;
}

.group {
  display: flex;
  flex-direction: column;
  padding-bottom: 17px;
  border-bottom: 1px solid #dfe2e7;
}

.first,
.ticker {
  gap: 6px;
}

.panel-body .ticker h3 {
  margin-bottom: -7px;
}

.row {
  display: flex;
  align-items: center;
  height: 20px;
}

.row label,
.row b {
  font-size: 9.8px;
  font-weight: 700;
  letter-spacing: -0.2px;
  color: #7a808a;
}

.row label {
  width: 46px;
  flex-shrink: 0;
  white-space: nowrap;
}

.row.wide-label label {
  width: 62px;
}

.row label.link {
  color: #2c86e6;
}

.link span {
  color: #747a84;
}

.field {
  height: 20px;
  padding: 0 4px;
  line-height: 19px;
  background: #fff;
  border: 1px solid #e6e9ee;
  border-radius: 2px;
  color: #666a70;
}

.select {
  flex: 1;
  display: flex;
  align-items: center;
  padding: 0 5px 0 2px;
}

.caret {
  margin-left: auto;
  border: 3.5px solid transparent;
  border-top-color: #6a6a6a;
  border-bottom: 0;
}

.url-field {
  width: 114px;
  letter-spacing: -0.25px;
  white-space: nowrap;
}

.drop-button {
  width: 19px;
  display: flex;
  align-items: center;
  margin-left: -1px;
}

.columns-icon {
  margin-left: 8px;
}

.minutes {
  width: 33px;
  white-space: nowrap;
  letter-spacing: -0.1px;
}

.upto {
  margin-left: 5px;
  width: 28px;
}

.count {
  width: 24px;
}

.items {
  margin-left: 7px;
}

.small {
  width: 32px;
}

.row.fields label {
  width: 34px;
}

.fields .select {
  width: 57px;
  flex: none;
  margin-right: 1px;
  padding-right: 4px;
}

.fields .select:last-child {
  margin-right: 0;
}

.single {
  margin-top: 10.5px;
}

.text-group {
  padding-bottom: 16px;
}

.panel-body .text-group h3 {
  line-height: 34px;
  margin-bottom: 8px;
}

.last {
  border: 0;
}

.last h3 {
  line-height: 35px;
}

.scrollbar {
  width: 9px;
  margin-left: 14px;
  display: flex;
  flex-direction: column;
  align-items: center;
  padding: 52px 0 5px;
}

.arrow-up {
  border: 2.5px solid transparent;
  border-bottom-color: #888;
  border-top: 0;
}

.thumb {
  width: 9px;
  height: 309px;
  margin-top: 3px;
  background: #bfc1c5;
}

.arrow-down {
  margin-top: auto;
  border: 2.5px solid transparent;
  border-top-color: #555;
  border-bottom: 0;
}

.alerts {
  position: absolute;
  left: 204px;
  top: 536px;
  width: 36px;
  height: 29px;
  display: flex;
  align-items: center;
  justify-content: center;
  gap: 3px;
  border-radius: 3px;
  background: #656b76;
  box-shadow: 0 1px 3px rgba(0, 0, 0, 0.4);
  font-size: 11px;
  color: #d98d55;
}

/* floating recorder buttons */
.recorder {
  position: absolute;
  left: 6px;
  top: 660px;
  display: flex;
  align-items: center;
  z-index: 5;
}

.rec-btn {
  width: 27px;
  height: 27px;
  margin-right: 2.4px;
  border-radius: 50%;
  background: #fff;
  box-shadow: 0 1px 4px 1px rgba(0, 0, 0, 0.7);
  display: flex;
  align-items: center;
  justify-content: center;
}

.mini {
  width: 17px;
  height: 17px;
  margin-right: 6.5px;
}

.done {
  background: #06d982;
}

/* taskbar */
.taskbar {
  height: 27px;
  display: flex;
  background: linear-gradient(90deg, #1f1d1b, #251a14 45%, #302119 60%, #231c1c);
  font-family: "Open Sans", sans-serif;
}

.start {
  width: 32px;
  display: flex;
  align-items: center;
  justify-content: center;
}

.search {
  width: 229px;
  display: flex;
  align-items: center;
  padding: 0 10px 0 6px;
  background: #303031;
}

.search span {
  flex: 1;
  margin-left: 6px;
  font-size: 10px;
  line-height: 26px;
  letter-spacing: -0.5px;
  color: #a8a8a8;
}

.apps {
  display: flex;
  gap: 3px;
  margin-left: 1px;
}

.app {
  width: 30px;
  display: flex;
  align-items: center;
  justify-content: center;
}

.current,
.running {
  border-bottom: 2px solid #6fb3e5;
  padding-top: 2px;
}

.running {
  width: 28px;
  margin: 0 1px;
}

.current {
  background: #575452;
}

.skype {
  font: bold 10px "Liberation Sans", sans-serif;
  text-anchor: middle;
  fill: #fff;
}

.tray {
  display: flex;
  align-items: center;
  gap: 10.5px;
  margin: 0 11px 0 auto;
}

.clock {
  display: flex;
  flex-direction: column;
  align-items: center;
  width: 42px;
  margin: 0 -2px 0 -5px;
  font-size: 8.3px;
  line-height: 11.5px;
  letter-spacing: -0.35px;
  color: #eee;
}

.note-count {
  font: 7px "Liberation Sans", sans-serif;
  text-anchor: middle;
  fill: #fff;
}
```
